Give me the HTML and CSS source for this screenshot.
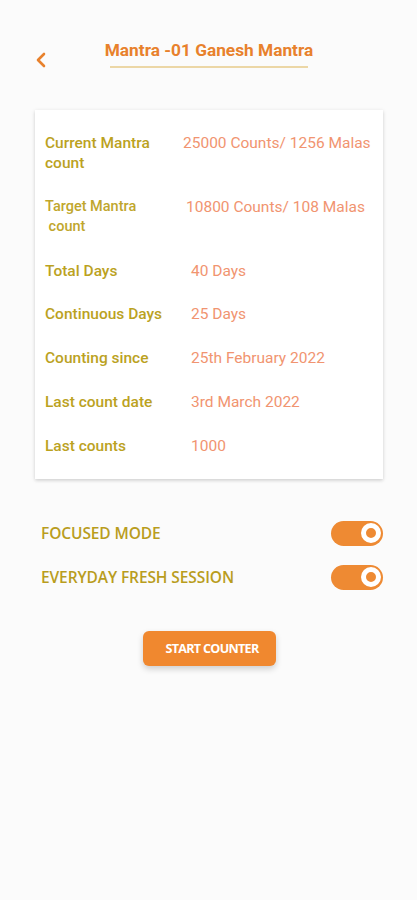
FILE: index.html
```html
<!DOCTYPE html>
<html lang="en">
<head>
<meta charset="utf-8">
<title>Mantra -01 Ganesh Mantra</title>
<link rel="stylesheet" href="styles.css">
</head>
<body>
<div class="screen">
  <header class="header">
    <button class="back" aria-label="Back">
      <svg width="12" height="16" viewBox="0 0 12 16"><polyline points="9,2 3,8 9,14" fill="none" stroke="#e8812c" stroke-width="2.6" stroke-linecap="round" stroke-linejoin="round"/></svg>
    </button>
    <div class="title-wrap">
      <h1 class="title">Mantra -01 Ganesh Mantra</h1>
      <div class="title-line"></div>
    </div>
  </header>

  <section class="card">
    <div class="row row-a">
      <div class="label">Current Mantra<br>count</div>
      <div class="value">25000 Counts/ 1256 Malas</div>
    </div>
    <div class="row row-b">
      <div class="label small">Target Mantra<br>&nbsp;count</div>
      <div class="value">10800 Counts/ 108 Malas</div>
    </div>
    <div class="row">
      <div class="label">Total Days</div>
      <div class="value">40 Days</div>
    </div>
    <div class="row">
      <div class="label">Continuous Days</div>
      <div class="value">25 Days</div>
    </div>
    <div class="row">
      <div class="label">Counting since</div>
      <div class="value">25th February 2022</div>
    </div>
    <div class="row">
      <div class="label">Last count date</div>
      <div class="value">3rd March 2022</div>
    </div>
    <div class="row">
      <div class="label">Last counts</div>
      <div class="value">1000</div>
    </div>
  </section>

  <section class="settings">
    <div class="setting">
      <span class="setting-label">FOCUSED MODE</span>
      <span class="toggle"><span class="knob"></span></span>
    </div>
    <div class="setting">
      <span class="setting-label">EVERYDAY FRESH SESSION</span>
      <span class="toggle"><span class="knob"></span></span>
    </div>
  </section>

  <div class="actions">
    <button class="start">START COUNTER</button>
  </div>
</div>
</body>
</html>
```
FILE: styles.css
```css
* { box-sizing: border-box; }
html, body { margin: 0; padding: 0; }
body {
  background: #fbfbfb;
  font-family: Roboto, "Liberation Sans", sans-serif;
  width: 417px;
  height: 900px;
  overflow: hidden;
}
.screen {
  padding: 39px 34px 0 35px;
}
.header {
  display: grid;
  grid-template-columns: 1fr auto 1fr;
  align-items: start;
}
.back {
  grid-column: 1;
  grid-row: 1;
  background: none;
  border: 0;
  padding: 0;
  margin: 13px 0 0 0;
  width: 12px;
  height: 16px;
  display: flex;
  justify-self: start;
}
.title-wrap {
  grid-column: 2;
  grid-row: 1;
  display: flex;
  flex-direction: column;
  align-items: center;
}
.title {
  margin: 0;
  font-size: 17.3px;
  line-height: 22px;
  font-weight: 700;
  color: #e8812c;
}
.title-line {
  width: 198px;
  height: 2px;
  margin-top: 5px;
  background: #ecd7a6;
}
.card {
  margin-top: 42px;
  width: 348px;
  background: #ffffff;
  box-shadow: 0 1px 4px rgba(0,0,0,0.14), 0 2px 3px rgba(0,0,0,0.06);
  padding: 23px 6px 23px 10px;
  display: flex;
  flex-direction: column;
  gap: 23.8px;
}
.row {
  display: grid;
  grid-template-columns: 146px 1fr;
  align-items: start;
}
.row-a { grid-template-columns: 138px 1fr; }
.row-b { grid-template-columns: 141px 1fr; }
.label {
  font-size: 15.5px;
  line-height: 20px;
  font-weight: 500;
  color: #bba21f;
}
.label.small { font-size: 14.5px; color: #c0a62c; }
.value {
  font-size: 15.5px;
  line-height: 20px;
  font-weight: 400;
  color: #f19470;
  white-space: nowrap;
}
.settings {
  margin-top: 42px;
  padding-left: 6px;
  width: 348px;
  display: flex;
  flex-direction: column;
  gap: 19px;
}
.setting {
  display: flex;
  align-items: center;
  justify-content: space-between;
  height: 25px;
}
.setting-label {
  font-family: "Open Sans", sans-serif;
  font-size: 15.5px;
  font-weight: 600;
  color: #b99d1d;
  letter-spacing: -0.1px;
}
.toggle {
  width: 52px;
  height: 25px;
  border-radius: 13px;
  background: #ee8a33;
  display: flex;
  align-items: center;
  justify-content: flex-end;
  padding-right: 2px;
}
.knob {
  width: 20px;
  height: 20px;
  border-radius: 50%;
  border: 5.5px solid #ffffff;
  background: #ee8a33;
}
.actions {
  margin-top: 41px;
  display: flex;
  justify-content: center;
  width: 348px;
}
.start {
  width: 133px;
  height: 35px;
  border: 0;
  border-radius: 6px;
  background: #f0882f;
  color: #ffffff;
  font-family: "Open Sans", sans-serif;
  font-weight: 700;
  font-size: 12.6px;
  letter-spacing: -0.7px;
  box-shadow: 0 3px 6px rgba(0,0,0,0.18);
  padding: 0 0 0 6px;
}
```
